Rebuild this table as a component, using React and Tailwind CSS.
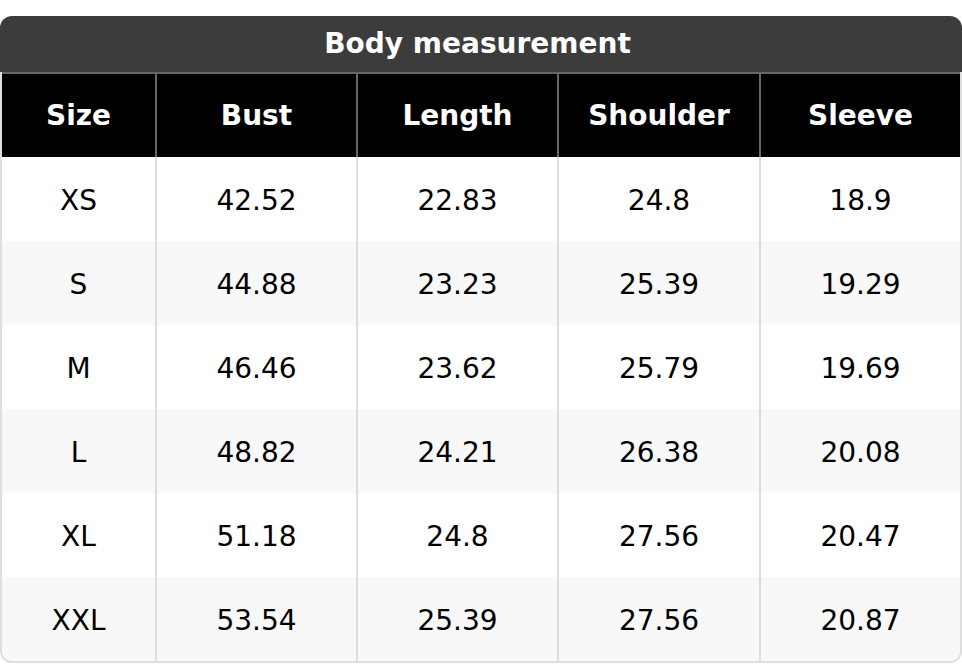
import React from "react";

const rows = [
    ["XS", "42.52", "22.83", "24.8", "18.9"],
    ["S", "44.88", "23.23", "25.39", "19.29"],
    ["M", "46.46", "23.62", "25.79", "19.69"],
    ["L", "48.82", "24.21", "26.38", "20.08"],
    ["XL", "51.18", "24.8", "27.56", "20.47"],
    ["XXL", "53.54", "25.39", "27.56", "20.87"],
];

const headers = ["Size", "Bust", "Length", "Shoulder", "Sleeve"];

const App = () => {
    return (
        <div className="bg-white w-[962px] h-[664px] pt-4" style={{ fontFamily: '"DejaVu Sans", sans-serif' }}>
            {/* TITLE */}
            <div className="h-14 rounded-t-xl bg-[#3c3c3c] flex justify-center items-center pr-[7px] text-white font-bold text-[28px]">
                Body measurement
            </div>

            {/* TABLE */}
            <div className="rounded-b-xl border-x-2 border-b-2 border-[#dddddd] overflow-hidden">
                <div className="grid grid-cols-[153px_201px_201px_202px_1fr] bg-black border-t-2 border-[#666666] text-white font-bold text-[28px] h-[85px]">
                    {headers.map((h, i) => (
                        <div key={h} className={`flex justify-center items-center pt-[1px] ${i > 0 ? "border-l-2 border-[#666666]" : ""}`}>
                            {h}
                        </div>
                    ))}
                </div>
                {rows.map((row, r) => (
                    <div
                        key={row[0]}
                        className={`grid grid-cols-[153px_201px_201px_202px_1fr] h-[84px] text-[28px] text-black ${r % 2 ? "bg-[#f8f8f8]" : "bg-white"}`}
                    >
                        {row.map((cell, i) => (
                            <div key={i} className={`flex justify-center items-center pt-[4px] ${i > 0 ? "border-l-2 border-[#dddddd]" : ""}`}>
                                {cell}
                            </div>
                        ))}
                    </div>
                ))}
            </div>
        </div>
    );
};

export default App;
